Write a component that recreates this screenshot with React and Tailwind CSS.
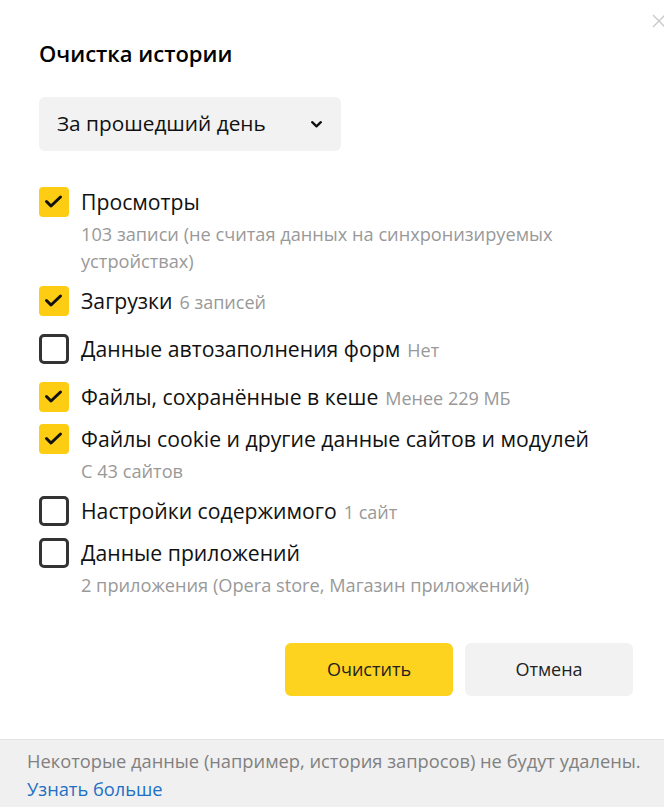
import React from "react";

const font = { fontFamily: '"Open Sans", "Noto Sans", sans-serif' };

function Check({ checked }) {
  if (checked) {
    return (
      <div className="w-[30px] h-[30px] shrink-0 rounded-[4px] bg-[#fdcd14] flex items-center justify-center">
        <svg width="30" height="30" viewBox="0 0 30 30">
          <path d="M7.5 14.5 L12 19 L21.5 10" fill="none" stroke="#111" strokeWidth="3" strokeLinecap="round" strokeLinejoin="round" />
        </svg>
      </div>
    );
  }
  return <div className="w-[30px] h-[30px] shrink-0 rounded-[5px] border-[3px] border-[#333]" />;
}

function Row({ checked, label, extra, sub, className = "" }) {
  return (
    <div className={"flex items-start gap-[12px] " + className}>
      <Check checked={checked} />
      <div className="flex flex-col">
        <div className="leading-[30px] text-[21.2px] text-[#111] whitespace-nowrap">
          {label}
          {extra && <span className="text-[18px] text-[#999] ml-[7px]">{extra}</span>}
        </div>
        {sub && <div className="mt-[4px] text-[18.2px] leading-[27px] text-[#999] whitespace-nowrap">{sub}</div>}
      </div>
    </div>
  );
}

export default function App() {
  return (
    <div className="relative w-[664px] h-[807px] bg-white overflow-hidden flex flex-col" style={font}>
      <div className="absolute left-[652px] top-[14px]">
        <svg width="14" height="14" viewBox="0 0 14 14">
          <path d="M1 1 L13 13 M13 1 L1 13" stroke="#c8c8c8" strokeWidth="1.3" />
        </svg>
      </div>
      <div className="flex-1 pl-[39px] pr-[31px] pt-[37px]">
        <h1 className="text-[22px] leading-[32px] font-semibold text-black">Очистка истории</h1>
        <div className="mt-[28px] w-[302px] h-[54px] rounded-[6px] bg-[#f2f2f2] flex items-center pl-[18px] pr-[19px] justify-between">
          <span className="text-[20.8px] text-[#111]">За прошедший день</span>
          <svg width="11" height="7" viewBox="0 0 11 7">
            <path d="M1.2 1.2 L5.5 5.3 L9.8 1.2" fill="none" stroke="#111" strokeWidth="2.3" strokeLinecap="round" strokeLinejoin="round" />
          </svg>
        </div>
        <div className="mt-[36px] flex flex-col">
          <Row checked label="Просмотры" sub={<>103 записи (не считая данных на синхронизируемых<br />устройствах)</>} />
          <Row checked label="Загрузки" extra="6 записей" className="mt-[11px]" />
          <Row label="Данные автозаполнения форм" extra="Нет" className="mt-[17px]" />
          <Row checked label="Файлы, сохранённые в кеше" extra="Менее 229 МБ" className="mt-[17px]" />
          <Row checked label="Файлы cookie и другие данные сайтов и модулей" sub="С 43 сайтов" className="mt-[11px]" />
          <Row label="Настройки содержимого" extra="1 сайт" className="mt-[11px]" />
          <Row label="Данные приложений" sub="2 приложения (Opera store, Магазин приложений)" className="mt-[11px]" />
        </div>
        <div className="mt-[44px] flex justify-end gap-[12px]">
          <button className="w-[168px] h-[53px] rounded-[6px] bg-[#fed320] text-[18px] text-[#222]">Очистить</button>
          <button className="w-[168px] h-[53px] rounded-[6px] bg-[#f2f2f2] text-[18px] text-[#222]">Отмена</button>
        </div>
      </div>
      <div className="h-[68px] border-t border-[#e3e3e3] bg-[#f0f0f0] pl-[27px] pt-[7px] text-[18.3px] leading-[28px]">
        <div className="text-[#808080] whitespace-nowrap">Некоторые данные (например, история запросов) не будут удалены.</div>
        <div className="text-[#1f6fc5]">Узнать больше</div>
      </div>
    </div>
  );
}
